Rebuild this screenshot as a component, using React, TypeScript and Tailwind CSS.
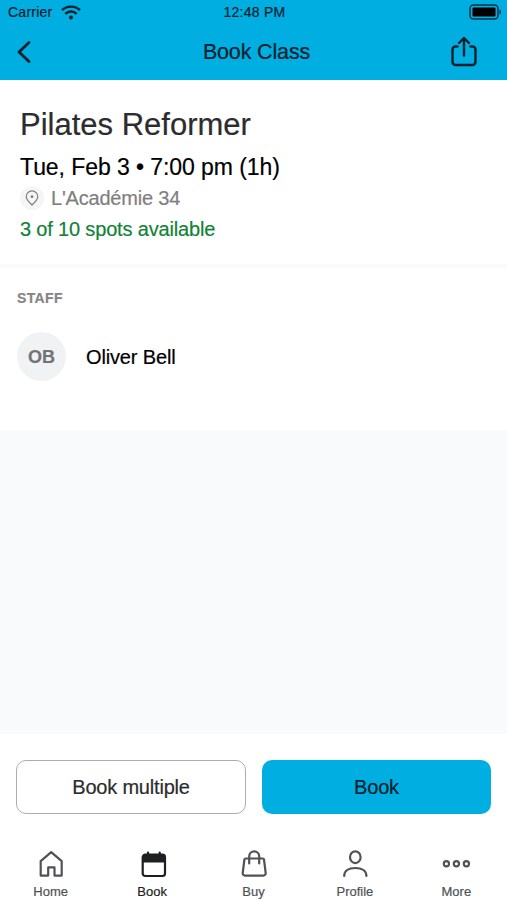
import type { ReactNode } from "react";

const stroke = {
  fill: "none",
  stroke: "currentColor",
  strokeWidth: 2.2,
  strokeLinecap: "round",
  strokeLinejoin: "round",
} as const;

const tabs: { label: string; active?: boolean; icon: ReactNode }[] = [
  {
    label: "Home",
    icon: (
      <path d="M3.700 11.200 14.200 2.200l10.500 9v14.400h-7.200v-8.200h-6.300v8.200H3.700Z" />
    ),
  },
  {
    label: "Book",
    active: true,
    icon: (
      <>
        <rect x="4.700" y="4.700" width="22.300" height="21.300" rx="2.500" />
        <path
          d="M4.500 6.500a2 2 0 0 1 2-2h18.700a2 2 0 0 1 2 2V12.500H4.500Z"
          fill="currentColor"
          stroke="none"
        />
        <path d="M10 2.600V6M21.700 2.600V6" />
      </>
    ),
  },
  {
    label: "Buy",
    icon: (
      <>
        <path d="M5.600 8.500h17.200a1.200 1.200 0 0 1 1.200 1l1.700 13.600a2.300 2.300 0 0 1-2.300 2.500H5a2.300 2.300 0 0 1-2.300-2.500L4.400 9.500a1.200 1.200 0 0 1 1.200-1Z" />
        <path d="M9.200 13.500V6.300a5 5 0 0 1 10 0v7.200" />
      </>
    ),
  },
  {
    label: "Profile",
    icon: (
      <>
        <ellipse cx="14.300" cy="7.200" rx="5.300" ry="5.900" />
        <path d="M3.200 26c0-4.800 4.100-8 11.100-8s11.100 3.200 11.100 8" />
      </>
    ),
  },
  {
    label: "More",
    icon: (
      <>
        <circle cx="4.400" cy="13.800" r="2.600" />
        <circle cx="14.400" cy="13.800" r="2.600" />
        <circle cx="24.400" cy="13.800" r="2.600" />
      </>
    ),
  },
];

function StatusBar() {
  return (
    <div className="flex h-6 items-center justify-between pl-2 pr-1 text-sm tracking-[0.25px] text-[#06202b]">
      <div className="flex w-[120px] items-center gap-2">
        <span>Carrier</span>
        <svg width="20" height="15" viewBox="0 0 20 15" fill="currentColor">
          <circle cx="10" cy="12.500" r="2" />
          <path
            d="M1 5.200a13 13 0 0 1 18 0M4.300 8.800a8.300 8.300 0 0 1 11.400 0"
            fill="none"
            stroke="currentColor"
            strokeWidth="2.400"
          />
        </svg>
      </div>
      <span className="relative -left-px">12:48 PM</span>
      <div className="flex w-[120px] justify-end">
        <svg width="34" height="16" viewBox="0 0 34 16">
          <rect
            x="1"
            y="1"
            width="28"
            height="14"
            rx="3.500"
            fill="none"
            stroke="#06303f"
            strokeWidth="1.500"
          />
          <rect x="3.500" y="3.500" width="23" height="9" rx="1" fill="#000" />
          <path d="M30.500 5.500c2 .5 2 4.500 0 5Z" fill="#06303f" />
        </svg>
      </div>
    </div>
  );
}

export default function App() {
  return (
    <div className="flex h-[900px] w-[507px] flex-col overflow-hidden bg-[#f8fafc] font-['Liberation_Sans',Arial,sans-serif] text-black [-webkit-text-stroke:0.2px]">
      <header className="h-20 shrink-0 bg-[#00aee2]">
        <StatusBar />
        <div className="flex h-14 items-center justify-between pl-4 pr-7 text-[#06202b]">
          <button className="w-12" aria-label="Back">
            <svg width="16" height="24" viewBox="0 0 16 24">
              <path d="M13 2.500 3 12l10 9.500" {...stroke} strokeWidth={2.800} />
            </svg>
          </button>
          <h1 className="text-[21.5px] tracking-[-0.15px]">Book Class</h1>
          <button aria-label="Share">
            <svg width="30" height="32" viewBox="0 0 30 32">
              <path
                d="M8.500 10.500H6.500A3 3 0 0 0 3.500 13.500v12.500a3 3 0 0 0 3 3h17a3 3 0 0 0 3-3V13.500a3 3 0 0 0-3-3H21.500M15 19.500V2.500M10 7l5-5 5 5"
                {...stroke}
                strokeWidth={2.400}
              />
            </svg>
          </button>
        </div>
      </header>

      <section className="h-[184px] shrink-0 bg-white px-5 pt-[25px]">
        <h2 className="text-[31px] leading-10 text-[#2c2c2e]">
          Pilates Reformer
        </h2>
        <p className="mt-1 text-[23px] leading-9 tracking-[-0.07px]">
          Tue, Feb 3 • 7:00 pm (1h)
        </p>
        <div className="-mt-px flex h-7 items-center gap-[7px] text-xl tracking-[-0.2px] text-[#7f7f7f]">
          <span className="flex size-6 items-center justify-center rounded-full bg-[#f5f5f5]">
            <svg width="14" height="16" viewBox="0 0 14 16">
              <path
                d="M7 15C4 12 1.200 9.500 1.200 6.700a5.800 5.800 0 0 1 11.600 0C12.800 9.500 10 12 7 15Z"
                {...stroke}
                strokeWidth={1.200}
              />
              <circle cx="7" cy="6.700" r="1.400" fill="currentColor" />
            </svg>
          </span>
          <span>L'Académie 34</span>
        </div>
        <p className="-mt-px text-xl leading-9 tracking-[-0.17px] text-[#118236]">
          3 of 10 spots available
        </p>
      </section>

      <section className="mt-1 h-[162px] shrink-0 bg-white px-[17px] pt-5">
        <h3 className="text-sm font-bold tracking-wide text-[#858585]">
          STAFF
        </h3>
        <div className="mt-6 flex items-center gap-5">
          <div className="flex size-[49px] items-center justify-center rounded-full bg-[#f0f2f4] text-lg font-bold text-[#707476]">
            OB
          </div>
          <span className="text-xl tracking-[-0.15px]">Oliver Bell</span>
        </div>
      </section>

      <footer className="mt-auto h-[166px] shrink-0 bg-white pt-[26px]">
        <div className="flex gap-4 px-4 text-xl tracking-[-0.2px]">
          <button className="h-[54px] w-[230px] rounded-[10px] border border-[#adadad] text-[#2c2c2e]">
            Book multiple
          </button>
          <button className="h-[54px] flex-1 rounded-[10px] bg-[#00aee2] text-[#06202b]">
            Book
          </button>
        </div>
        <nav className="mt-9 flex">
          {tabs.map((tab) => (
            <div
              key={tab.label}
              className={`flex flex-1 flex-col items-center gap-1.5 text-[13px] leading-4 ${
                tab.active ? "text-[#1d1f20]" : "text-[#505254]"
              }`}
            >
              <svg
                className="overflow-visible"
                width="28"
                height="28"
                viewBox="0 0 28 28"
                {...stroke}
              >
                {tab.icon}
              </svg>
              <span>{tab.label}</span>
            </div>
          ))}
        </nav>
      </footer>
    </div>
  );
}
